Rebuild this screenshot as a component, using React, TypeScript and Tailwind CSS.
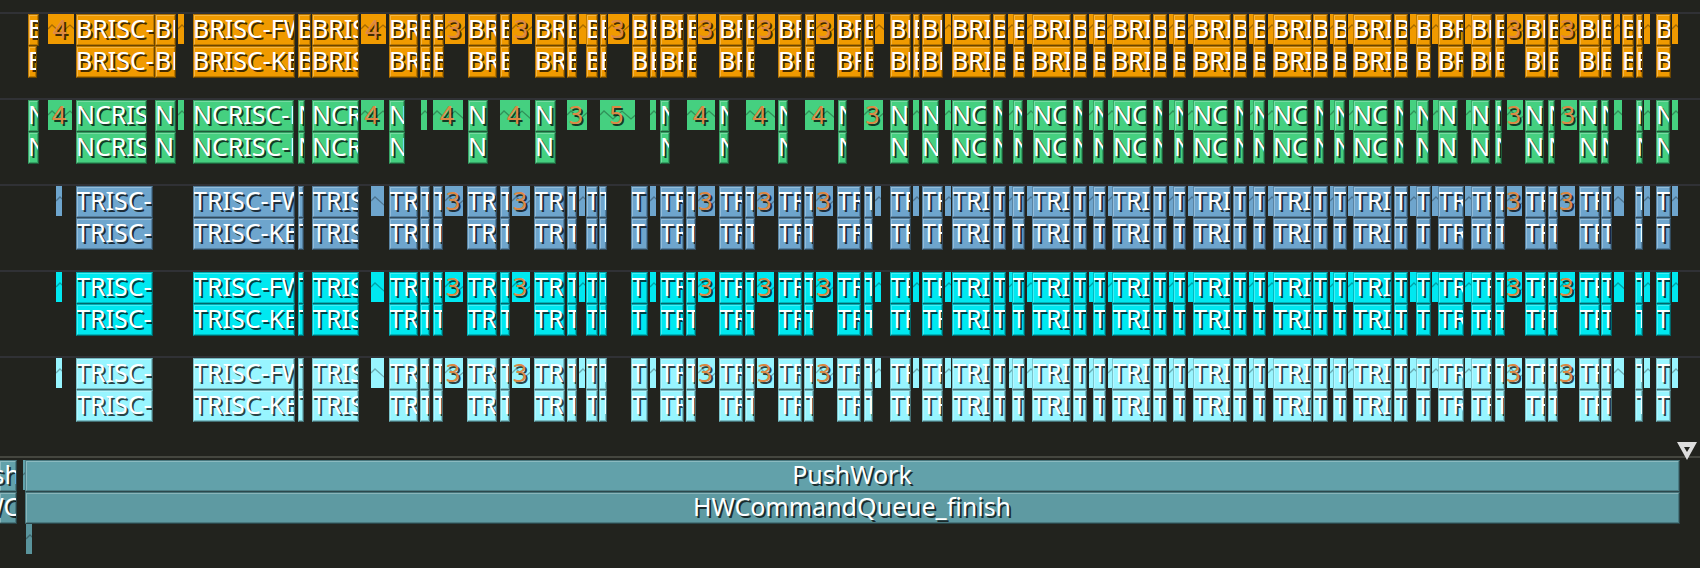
import type { ReactNode } from "react";

type Item = [start: number, end: number, count?: number];

type Track = {
  name: string;
  color: string;
  spans: Item[];
  merged: Item[];
  nested?: Record<number, number>;
};

const BRISC: Track = {
  name: "BRISC",
  color: "bg-[#f09a00]",
  spans: [
    [28, 39], [76, 155], [155, 176], [193, 295], [298, 311], [312, 359], [389, 418], [420, 431], [433, 444],
    [468, 497], [500, 510], [535, 565], [567, 577], [586, 598], [600, 607], [632, 648], [650, 657], [660, 684],
    [687, 697], [719, 743], [746, 755], [778, 802], [805, 815], [837, 862], [864, 874], [890, 911], [913, 920],
    [922, 943], [952, 991], [993, 1006], [1013, 1025], [1032, 1071], [1073, 1087], [1093, 1106], [1112, 1151],
    [1153, 1167], [1173, 1186], [1193, 1231], [1233, 1247], [1253, 1266], [1273, 1312], [1313, 1328], [1333, 1347],
    [1353, 1392], [1394, 1408], [1416, 1431], [1438, 1464], [1471, 1492], [1495, 1505], [1525, 1546], [1548, 1559],
    [1579, 1600], [1601, 1612], [1622, 1634], [1636, 1643], [1656, 1671],
  ],
  nested: { 28: 37 },
  merged: [
    [48, 74, 4], [178, 184], [361, 386, 4], [445, 465, 3], [512, 532, 3], [579, 586], [608, 629, 3], [698, 716, 3],
    [757, 775, 3], [816, 834, 3], [875, 884], [945, 951], [1008, 1013], [1027, 1032], [1089, 1093], [1107, 1112],
    [1169, 1173], [1188, 1193], [1249, 1253], [1268, 1273], [1330, 1333], [1348, 1353], [1410, 1416], [1432, 1438],
    [1465, 1471], [1507, 1523, 3], [1560, 1577, 3], [1614, 1620], [1644, 1650], [1672, 1678],
  ],
};

const NCRISC: Track = {
  name: "NCRISC",
  color: "bg-[#45d080]",
  spans: [
    [28, 39], [76, 147], [155, 176], [193, 294], [298, 305], [312, 359], [389, 405], [468, 488], [535, 556],
    [660, 670], [719, 729], [778, 788], [838, 847], [890, 909], [922, 939], [952, 987], [993, 1003], [1013, 1023],
    [1033, 1067], [1073, 1083], [1093, 1104], [1113, 1147], [1153, 1163], [1174, 1184], [1193, 1228], [1234, 1244],
    [1253, 1265], [1273, 1308], [1314, 1324], [1334, 1345], [1353, 1388], [1394, 1404], [1416, 1429], [1438, 1458],
    [1471, 1490], [1495, 1502], [1525, 1544], [1548, 1555], [1579, 1598], [1601, 1609], [1636, 1643], [1656, 1670],
  ],
  merged: [
    [48, 72, 4], [178, 184], [361, 384, 4], [421, 427], [433, 463, 4], [500, 530, 4], [567, 587, 3], [600, 635, 5],
    [650, 656], [687, 715, 4], [746, 775, 4], [805, 834, 4], [864, 883, 3], [913, 919], [945, 951], [1009, 1013],
    [1027, 1033], [1089, 1093], [1108, 1113], [1169, 1174], [1188, 1193], [1250, 1253], [1268, 1273], [1330, 1334],
    [1349, 1353], [1410, 1416], [1433, 1438], [1466, 1471], [1507, 1523, 3], [1561, 1577, 3], [1614, 1622],
    [1644, 1650], [1672, 1678],
  ],
};

const TRISC_SPANS: Item[] = [
  [76, 153], [193, 295], [298, 304], [312, 359], [389, 418], [420, 430], [433, 443], [467, 497], [500, 510],
  [534, 565], [567, 577], [586, 598], [599, 607], [631, 648], [660, 684], [686, 696], [719, 743], [745, 755],
  [778, 802], [804, 814], [837, 861], [864, 873], [890, 911], [922, 943], [952, 991], [993, 1006], [1012, 1025],
  [1032, 1071], [1073, 1087], [1093, 1106], [1112, 1151], [1153, 1167], [1173, 1186], [1193, 1231], [1233, 1247],
  [1253, 1266], [1273, 1312], [1313, 1328], [1333, 1347], [1353, 1392], [1394, 1408], [1416, 1431], [1438, 1464],
  [1471, 1492], [1495, 1505], [1525, 1546], [1548, 1558], [1579, 1600], [1601, 1612], [1635, 1643], [1656, 1671],
];

const TRISC_MERGED: Item[] = [
  [56, 62], [371, 384], [445, 463, 3], [512, 530, 3], [579, 585], [650, 656], [698, 715, 3], [757, 774, 3],
  [816, 833, 3], [875, 881], [913, 919], [945, 951], [1009, 1012], [1027, 1032], [1089, 1093], [1108, 1112],
  [1169, 1173], [1188, 1193], [1249, 1253], [1268, 1273], [1330, 1333], [1348, 1353], [1410, 1416], [1432, 1438],
  [1465, 1471], [1507, 1522, 3], [1560, 1575, 3], [1614, 1624], [1644, 1650], [1672, 1678],
];

const TRACKS: Track[] = [
  BRISC,
  NCRISC,
  { name: "TRISC", color: "bg-[#6ea5cd]", spans: TRISC_SPANS, merged: TRISC_MERGED },
  { name: "TRISC", color: "bg-[#00e8f0]", spans: TRISC_SPANS, merged: TRISC_MERGED },
  { name: "TRISC", color: "bg-[#98f5ff]", spans: TRISC_SPANS, merged: TRISC_MERGED },
];

const ZIGZAG = Array.from({ length: 20 }, (_, i) => `L${4 + i * 9} ${i % 2 ? 19 : 11}`).join(" ");

/* One grid column per tick, so each zone takes the columns of its own duration. */
const columns = ([start, end]: Item) => ({ gridColumn: `${start + 1} / ${end + 1}` });

function Lane({ children }: { children: ReactNode }) {
  return <div className="grid h-8 grid-cols-[repeat(1700,minmax(0,1fr))] grid-rows-1 items-start">{children}</div>;
}

/* "scrolled" is for a zone that began before the visible part of the timeline. */
const ALIGN = {
  start: "border-l -indent-px",
  center: "border-l -indent-px justify-center",
  scrolled: "-indent-[38px]",
};

function Zone({ span, color, label, align = "start" }: {
  span: Item;
  color: string;
  label: string;
  align?: keyof typeof ALIGN;
}) {
  return (
    <div
      className={`row-start-1 flex h-8 overflow-hidden whitespace-nowrap border-t border-r border-b border-t-black/25 border-r-black/55 border-b-black/55 border-l-black/20 leading-[26px] text-white shadow-[inset_-1px_-1px_0_#00000038,inset_1px_1px_0_#ffffff44] [text-shadow:2px_2px_0_#000000b8] ${color} ${ALIGN[align]}`}
      style={columns(span)}
    >
      {label}
    </div>
  );
}

function Merged({ span, color }: { span: Item; color: string }) {
  return (
    <div
      className={`row-start-1 grid h-[30px] -indent-[2px] overflow-hidden leading-7 text-[#dd8844] [text-shadow:2px_2px_0_#000000b8] ${color}`}
      style={columns(span)}
    >
      <svg className="col-start-1 row-start-1 h-[30px] w-full" aria-hidden="true">
        <path d={`M0 15 ${ZIGZAG}`} fill="none" stroke="#000" strokeOpacity="0.3" strokeWidth="1.3" />
      </svg>
      {span[2] && <span className="col-start-1 row-start-1 text-center">{span[2]}</span>}
    </div>
  );
}

function DeviceTrack({ track }: { track: Track }) {
  const { name, color, spans, merged, nested } = track;
  return (
    <section className="h-[86px] border-t-2 border-[#303135]">
      <Lane>
        {merged.map((s) => <Merged key={s[0]} span={s} color={color} />)}
        {spans.map((s) => <Zone key={s[0]} span={s} color={color} label={`${name}-FW`} />)}
      </Lane>
      <Lane>
        {spans.map((s) => (
          <Zone key={s[0]} span={[s[0], nested?.[s[0]] ?? s[1]]} color={color} label={`${name}-KERNEL`} />
        ))}
      </Lane>
    </section>
  );
}

export default function App() {
  return (
    <main className="min-h-screen overflow-hidden bg-[#22231e] pt-3 font-['Noto_Sans',sans-serif] text-[25px]">
      {TRACKS.map((t, i) => <DeviceTrack key={i} track={t} />)}
      <section className="relative mt-[14px] border-t-2 border-[#45463f] pt-0.5">
        <svg className="absolute -top-4 right-[3px] h-[18px] w-5" viewBox="0 0 20 18" aria-hidden="true">
          <path d="M0 0H20L10 18ZM7 5L10 10L13 5Z" fill="#ddd" fillRule="evenodd" />
        </svg>
        <Lane>
          <Merged span={[23, 26]} color="bg-[#62a1aa]" />
          <Zone span={[0, 17]} color="bg-[#62a1aa]" label="PushWork" align="scrolled" />
          <Zone span={[25, 1680]} color="bg-[#62a1aa]" label="PushWork" align="center" />
        </Lane>
        <Lane>
          <Zone span={[0, 17]} color="bg-[#5e9aa2]" label="HWCommandQueue_finish" align="scrolled" />
          <Zone span={[25, 1680]} color="bg-[#5e9aa2]" label="HWCommandQueue_finish" align="center" />
        </Lane>
        <Lane>
          <Merged span={[26, 32]} color="bg-[#5a949c]" />
        </Lane>
      </section>
    </main>
  );
}
